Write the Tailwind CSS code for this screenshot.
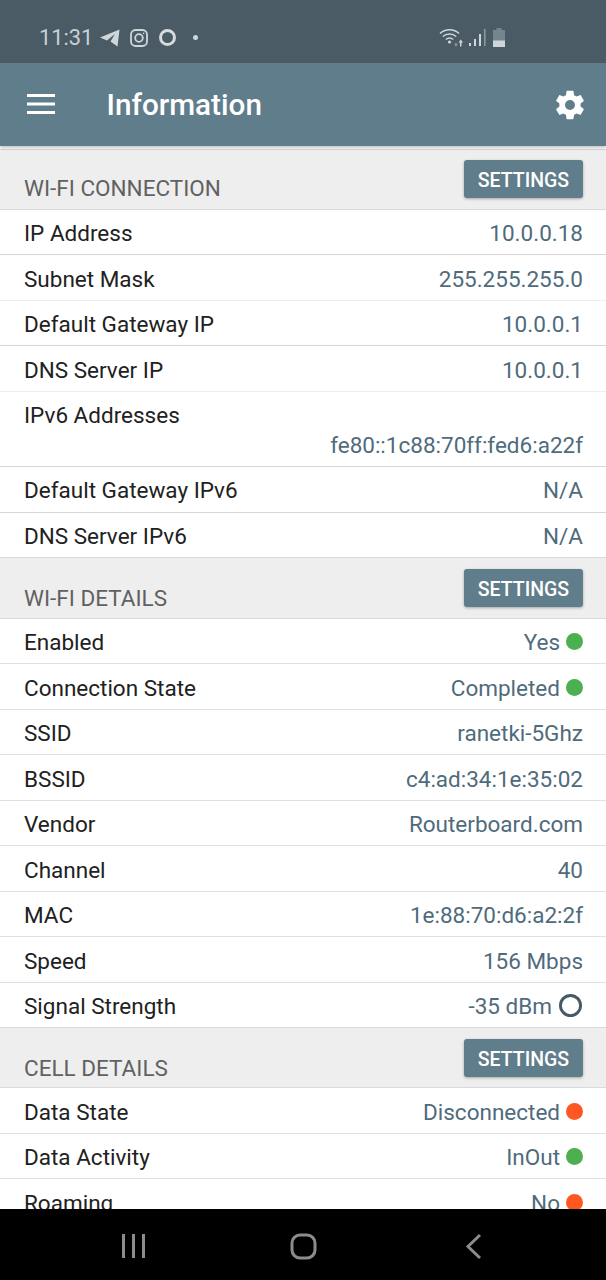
<!doctype html>
<html><head><meta charset="utf-8"><script src="https://cdn.jsdelivr.net/npm/@tailwindcss/browser@4"></script></head>
<body class="m-0">
<div class="w-[606px] h-[1280px] flex flex-col overflow-hidden bg-white font-['Roboto',sans-serif]">
  <div class="h-[63px] bg-[#4a5b65] flex items-center pl-[39px] pr-[101px] shrink-0 text-[#c9d1d5]">
    <span class="text-[21.8px] leading-none mt-[13px] w-[52px]">11:31</span>
    <svg class="w-[20px] h-[18px] ml-[9px] mt-[12px]" viewBox="0 0 20 18" fill="#cfd6da"><path d="M0 8.5 19.5 0.5 17.5 17.5 10.5 12.5 15 5 7 11.5Z"/></svg>
    <svg class="w-[18px] h-[18px] ml-[10px] mt-[12px]" viewBox="0 0 18 18" fill="none" stroke="#cfd6da" stroke-width="1.8"><rect x="1" y="1" width="16" height="16" rx="4.5"/><circle cx="9" cy="9" r="3.8"/><circle cx="13.6" cy="4.4" r="0.8" fill="#cfd6da" stroke="none"/></svg>
    <div class="w-[17px] h-[17px] rounded-full border-[3.5px] border-[#d5dbde] ml-[11px] mt-[12px]"></div>
    <div class="w-[5px] h-[5px] rounded-full bg-[#cfd6da] ml-[17px] mt-[12px]"></div>
    <div class="ml-auto flex items-center mt-[12px]">
      <svg class="w-[24px] h-[20px]" viewBox="0 0 24 20" fill="none"><path d="M1 5.5C6 .5 15 .5 20 5.5M3.8 8.5C7.5 5 13.5 5 17.2 8.5M6.8 11.5C9 9.7 12 9.7 14.2 11.5" stroke="#cfd6da" stroke-width="1.5"/><circle cx="10.5" cy="14" r="1.6" fill="#cfd6da"/><path d="M19.5 14.5l2.3-3 2.2 3h-1.5v4h-1.5v-4Z" fill="#cfd6da"/><path d="M15.2 15.5h3.6l-1.8 3.5Z" fill="#8d9ba3"/></svg>
      <svg class="w-[17px] h-[19px] ml-[6px]" viewBox="0 0 17 19" fill="#cfd6da"><rect x="0" y="15" width="2" height="3"/><rect x="5" y="11" width="2" height="7"/><rect x="10" y="6" width="2" height="12"/><rect x="15" y="1" width="1.6" height="17" fill="#8a989f"/></svg>
      <svg class="w-[12px] h-[19px] ml-[7px]" viewBox="0 0 12 19"><path d="M3.5 0h5v2H12v17H0V2h3.5Z" fill="#75858e"/><path d="M0 12.5h12V19H0Z" fill="#cfd6da"/></svg>
    </div>
  </div>
  <div class="h-[83px] bg-[#607d8b] flex items-center pl-[27px] pr-[19px] shrink-0 relative z-10 shadow-[0_2px_3px_rgba(0,0,0,0.22)]">
    <svg class="w-[28px] h-[20px] -mt-[2px]" viewBox="0 0 28 20" fill="#fff"><rect y="0" width="28" height="3"/><rect y="8.5" width="28" height="3"/><rect y="17" width="28" height="3"/></svg>
    <span class="ml-[51.5px] text-white text-[29.7px] font-medium leading-none mt-[1px]">Information</span>
    <svg class="w-[34px] h-[34px] ml-auto mt-[1px]" viewBox="0 0 24 24" fill="#fff"><path d="M19.43 12.98c.04-.32.07-.64.07-.98s-.03-.66-.07-.98l2.11-1.65c.19-.15.24-.42.12-.64l-2-3.46c-.12-.22-.39-.3-.61-.22l-2.49 1c-.52-.4-1.08-.73-1.69-.98l-.38-2.65C14.46 2.18 14.25 2 14 2h-4c-.25 0-.46.18-.49.42l-.38 2.65c-.61.25-1.17.59-1.69.98l-2.49-1c-.23-.09-.49 0-.61.22l-2 3.46c-.13.22-.07.49.12.64l2.11 1.65c-.04.32-.07.65-.07.98s.03.66.07.98l-2.11 1.65c-.19.15-.24.42-.12.64l2 3.46c.12.22.39.3.61.22l2.49-1c.52.4 1.08.73 1.69.98l.38 2.65c.03.24.24.42.49.42h4c.25 0 .46-.18.49-.42l.38-2.65c.61-.25 1.17-.59 1.69-.98l2.49 1c.23.09.49 0 .61-.22l2-3.46c.12-.22.07-.49-.12-.64l-2.11-1.65zM12 15.5c-1.93 0-3.5-1.57-3.5-3.5s1.57-3.5 3.5-3.5 3.5 1.57 3.5 3.5-1.57 3.5-3.5 3.5z"/></svg>
  </div>
  <div class="flex-1 overflow-hidden pt-[3px] text-[22.5px] leading-none text-[#212121]">
    <div class="h-[60.5px] bg-[#eeeeee] border-t border-[#d8dadb] border-b flex justify-between pl-[24px] pr-[23px]"><span class="text-[#616161] mt-[27px]">WI-FI CONNECTION</span><button class="h-[38px] w-[119px] mt-[10px] pt-[3px] bg-[#607d8b] text-white text-[19.5px] font-medium rounded-[3px] shadow-[0_1px_3px_rgba(0,0,0,0.3)]">SETTINGS</button></div>
    <div class="h-[45.5px] pt-[3px] flex justify-between items-center pl-[24px] pr-[23px] border-b border-[#d6d6d6]"><span>IP Address</span><span class="text-[#4f6b7c]">10.0.0.18</span></div>
    <div class="h-[45.5px] pt-[3px] flex justify-between items-center pl-[24px] pr-[23px] border-b border-[#eeeeee]"><span>Subnet Mask</span><span class="text-[#4f6b7c]">255.255.255.0</span></div>
    <div class="h-[45.5px] pt-[3px] flex justify-between items-center pl-[24px] pr-[23px] border-b border-[#d6d6d6]"><span>Default Gateway IP</span><span class="text-[#4f6b7c]">10.0.0.1</span></div>
    <div class="h-[45.5px] pt-[3px] flex justify-between items-center pl-[24px] pr-[23px] border-b border-[#eeeeee]"><span>DNS Server IP</span><span class="text-[#4f6b7c]">10.0.0.1</span></div>
    <div class="h-[75px] pt-[3px] flex flex-col justify-center gap-[8px] pl-[24px] pr-[23px] border-b border-[#d6d6d6]"><span>IPv6 Addresses</span><span class="text-[#4f6b7c] self-end">fe80::1c88:70ff:fed6:a22f</span></div>
    <div class="h-[46px] pt-[3px] flex justify-between items-center pl-[24px] pr-[23px] border-b border-[#d6d6d6]"><span>Default Gateway IPv6</span><span class="text-[#4f6b7c]">N/A</span></div>
    <div class="h-[44.5px] pt-[3px] flex justify-between items-center pl-[24px] pr-[23px]"><span>DNS Server IPv6</span><span class="text-[#4f6b7c]">N/A</span></div>
    <div class="h-[61.5px] bg-[#eeeeee] border-t border-[#d8dadb] border-b flex justify-between pl-[24px] pr-[23px]"><span class="text-[#616161] mt-[29px]">WI-FI DETAILS</span><button class="h-[38px] w-[119px] mt-[11px] pt-[3px] bg-[#607d8b] text-white text-[19.5px] font-medium rounded-[3px] shadow-[0_1px_3px_rgba(0,0,0,0.3)]">SETTINGS</button></div>
    <div class="h-[45.5px] pt-[3px] flex items-center pl-[24px] pr-[23px] border-b border-[#e0e0e0]"><span class="mr-auto">Enabled</span><span class="text-[#4f6b7c]">Yes</span><span class="w-[17px] h-[17px] rounded-full bg-[#4caf50] ml-[6px] -mt-[1px]"></span></div>
    <div class="h-[45.5px] pt-[3px] flex items-center pl-[24px] pr-[23px] border-b border-[#e0e0e0]"><span class="mr-auto">Connection State</span><span class="text-[#4f6b7c]">Completed</span><span class="w-[17px] h-[17px] rounded-full bg-[#4caf50] ml-[6px] -mt-[1px]"></span></div>
    <div class="h-[45.5px] pt-[3px] flex justify-between items-center pl-[24px] pr-[23px] border-b border-[#e0e0e0]"><span>SSID</span><span class="text-[#4f6b7c]">ranetki-5Ghz</span></div>
    <div class="h-[45.5px] pt-[3px] flex justify-between items-center pl-[24px] pr-[23px] border-b border-[#e0e0e0]"><span>BSSID</span><span class="text-[#4f6b7c]">c4:ad:34:1e:35:02</span></div>
    <div class="h-[45.5px] pt-[3px] flex justify-between items-center pl-[24px] pr-[23px] border-b border-[#e0e0e0]"><span>Vendor</span><span class="text-[#4f6b7c]">Routerboard.com</span></div>
    <div class="h-[45.5px] pt-[3px] flex justify-between items-center pl-[24px] pr-[23px] border-b border-[#e0e0e0]"><span>Channel</span><span class="text-[#4f6b7c]">40</span></div>
    <div class="h-[45.5px] pt-[3px] flex justify-between items-center pl-[24px] pr-[23px] border-b border-[#e0e0e0]"><span>MAC</span><span class="text-[#4f6b7c]">1e:88:70:d6:a2:2f</span></div>
    <div class="h-[45.5px] pt-[3px] flex justify-between items-center pl-[24px] pr-[23px] border-b border-[#e0e0e0]"><span>Speed</span><span class="text-[#4f6b7c]">156 Mbps</span></div>
    <div class="h-[44.5px] pt-[3px] flex items-center pl-[24px] pr-[23px]"><span class="mr-auto">Signal Strength</span><span class="text-[#4f6b7c]">-35 dBm</span><svg class="w-[23px] h-[23px] ml-[7px] -mt-[2px] mr-[1px]" viewBox="0 0 24 24" fill="none" stroke-width="3"><circle cx="12" cy="12" r="10.5" stroke="#455a64"/></svg></div>
    <div class="h-[61px] bg-[#eeeeee] border-t border-[#d8dadb] border-b flex justify-between pl-[24px] pr-[23px]"><span class="text-[#616161] mt-[29px]">CELL DETAILS</span><button class="h-[38px] w-[119px] mt-[11px] pt-[3px] bg-[#607d8b] text-white text-[19.5px] font-medium rounded-[3px] shadow-[0_1px_3px_rgba(0,0,0,0.3)]">SETTINGS</button></div>
    <div class="h-[45.5px] pt-[3px] flex items-center pl-[24px] pr-[23px] border-b border-[#e0e0e0]"><span class="mr-auto">Data State</span><span class="text-[#4f6b7c]">Disconnected</span><span class="w-[17px] h-[17px] rounded-full bg-[#ff5722] ml-[6px] -mt-[1px]"></span></div>
    <div class="h-[45.5px] pt-[3px] flex items-center pl-[24px] pr-[23px] border-b border-[#e0e0e0]"><span class="mr-auto">Data Activity</span><span class="text-[#4f6b7c]">InOut</span><span class="w-[17px] h-[17px] rounded-full bg-[#4caf50] ml-[6px] -mt-[1px]"></span></div>
    <div class="h-[45.5px] pt-[3px] flex items-center pl-[24px] pr-[23px]"><span class="mr-auto">Roaming</span><span class="text-[#4f6b7c]">No</span><span class="w-[17px] h-[17px] rounded-full bg-[#ff5722] ml-[6px] -mt-[1px]"></span></div>
  </div>
  <div class="h-[71px] bg-black shrink-0 relative">
    <svg class="absolute left-[121px] top-[24px] w-[26px] h-[26px]" viewBox="0 0 26 26" fill="#8c8c8c"><rect x="1" y="1" width="3" height="24"/><rect x="11" y="1" width="3" height="24"/><rect x="21" y="1" width="3" height="24"/></svg>
    <svg class="absolute left-[290px] top-[24px] w-[27px] h-[27px]" viewBox="0 0 27 27" fill="none" stroke="#8c8c8c" stroke-width="3"><rect x="2" y="2" width="23" height="23" rx="8"/></svg>
    <svg class="absolute left-[465px] top-[24px] w-[18px] h-[27px]" viewBox="0 0 18 27" fill="none" stroke="#8c8c8c" stroke-width="3"><path d="M15 2 3 13.5 15 25"/></svg>
  </div>
</div>
</body></html>
